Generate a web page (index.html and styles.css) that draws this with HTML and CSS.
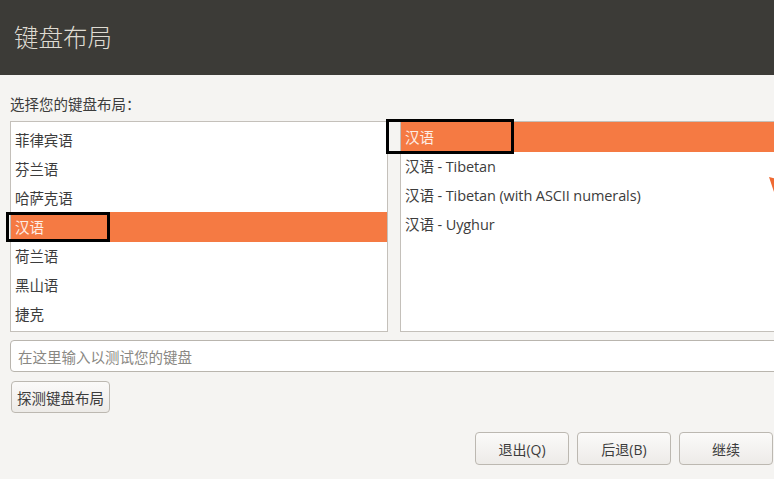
FILE: index.html
```html
<!DOCTYPE html>
<html lang="zh">
<head>
  <meta charset="UTF-8" />
  <title>键盘布局</title>
  <link rel="stylesheet" href="styles.css">
</head>
<body>
  <div class="header">
    <h1>键盘布局</h1>
  </div>

  <div class="content">
    <div class="label">选择您的键盘布局：</div>

    <div class="lists">
      <ul class="list list-left">
        <li>菲律宾语</li>
        <li>芬兰语</li>
        <li>哈萨克语</li>
        <li class="selected">汉语<span class="focus focus-left"></span></li>
        <li>荷兰语</li>
        <li>黑山语</li>
        <li>捷克</li>
      </ul>
      <ul class="list list-right">
        <li class="selected">汉语<span class="focus focus-right"></span></li>
        <li>汉语 - Tibetan</li>
        <li>汉语 - Tibetan (with ASCII numerals)</li>
        <li>汉语 - Uyghur</li>
        <svg class="cursor" width="8" height="18" viewBox="0 0 8 18">
          <polygon points="0,0 8,2 6,18 3,9" fill="#ef6a32" />
        </svg>
      </ul>
    </div>

    <input class="test-input" type="text" placeholder="在这里输入以测试您的键盘">

    <div class="detect-row">
      <button class="btn">探测键盘布局</button>
    </div>

    <div class="actions">
      <button class="btn btn-action">退出(Q)</button>
      <button class="btn btn-action">后退(B)</button>
      <button class="btn btn-action">继续</button>
    </div>
  </div>
</body>
</html>
```

FILE: styles.css
```css
body {
  margin: 0;
  background: #f5f4f2;
  font-family: "Open Sans", "Noto Sans CJK SC", sans-serif;
  color: #3c3c3c;
  width: 774px;
  height: 479px;
  overflow: hidden;
}
.header {
  background: #3c3b37;
  height: 75px;
  padding-left: 14px;
  box-sizing: border-box;
}
.header h1 {
  margin: 0;
  font-family: "Noto Sans CJK SC", sans-serif;
  font-weight: 300;
  font-size: 24.5px;
  line-height: 73px;
  color: #dfdbd2;
}
.content {
  padding: 19px 0 0 10px;
}
.label {
  font-family: "Noto Sans CJK SC", sans-serif;
  font-size: 14.5px;
  line-height: 20px;
  margin-bottom: 7px;
}
.lists {
  display: flex;
  gap: 12px;
  width: 800px;
}
.list {
  list-style: none;
  margin: 0;
  padding: 0;
  height: 211px;
  box-sizing: border-box;
  background: #fff;
  border: 1px solid #c4c0ba;
  position: relative;
}
.list-left {
  width: 378px;
  padding-top: 4px;
}
.list-right {
  flex: 1;
}
.list li {
  position: relative;
  height: 29px;
  line-height: 29px;
  padding-left: 4px;
  font-size: 14.5px;
  letter-spacing: -0.1px;
  white-space: nowrap;
}
.list-left li.selected {
  margin-top: -1px;
  height: 30px;
  line-height: 31px;
}
.list-right li.selected {
  height: 30px;
  line-height: 31px;
}
.list li.selected {
  background: #f57a43;
  color: #fdeee6;
}
.focus {
  position: absolute;
  border: 3px solid #000;
  box-sizing: border-box;
}
.focus-left {
  left: -5px;
  top: 0;
  width: 104px;
  height: 30px;
}
.focus-right {
  left: -15px;
  top: -3px;
  width: 128px;
  height: 35px;
}
.cursor {
  position: absolute;
  left: 368px;
  top: 55px;
}
.test-input {
  display: block;
  margin-top: 8px;
  width: 800px;
  height: 32px;
  box-sizing: border-box;
  border: 1px solid #b9b5ae;
  border-radius: 4px;
  background: #fff;
  padding: 0 7px;
  font-family: "Noto Sans CJK SC", sans-serif;
  font-size: 14.5px;
}
.test-input::placeholder {
  color: #8a8883;
}
.detect-row {
  margin-top: 9px;
  padding-left: 1px;
}
.btn {
  height: 32px;
  padding: 0 5px;
  font-family: "Open Sans", "Noto Sans CJK SC", sans-serif;
  font-size: 14.5px;
  color: #3c3c3c;
  background: linear-gradient(#fbfaf9, #edebe8);
  border: 1px solid #bcb8b1;
  border-radius: 4px;
}
.actions {
  display: flex;
  justify-content: flex-end;
  gap: 8px;
  margin-top: 19px;
  padding-right: 1px;
}
.btn-action {
  width: 94px;
  height: 33px;
  font-size: 14px;
}
```
